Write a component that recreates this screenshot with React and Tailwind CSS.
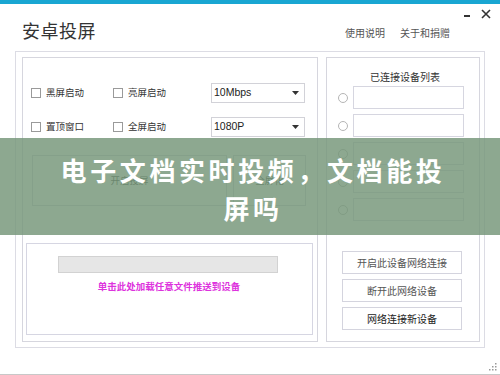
import React from 'react';

const cjk = "font-['Noto_Sans_CJK_SC',sans-serif]";

const CheckItem = ({ label, className = '' }) => (
    <div className={`flex items-center gap-[5px] ${className}`}>
        <span className="w-[10px] h-[10px] border border-[#9a9a9a] bg-white" />
        <span className="text-[9.5px] leading-none text-[#333]">{label}</span>
    </div>
);

const SelectBox = ({ value }) => (
    <div className="ml-auto mr-[12px] w-[94px] h-[20px] border border-[#d2d2d8] flex items-center pl-[2px] pr-[5px] text-[10.5px] text-[#222] font-['Liberation_Sans',sans-serif]">
        <span>{value}</span>
        <svg className="ml-auto" width="7" height="4" viewBox="0 0 7 4"><path d="M0 0h7L3.5 4z" fill="#333" /></svg>
    </div>
);

const DeviceRow = () => (
    <div className="flex items-center h-[23px]">
        <span className="ml-[11px] w-[10px] h-[10px] rounded-full border border-[#b5b5b5] bg-white" />
        <div className="ml-[5px] w-[111px] h-[23px] border border-[#d6d6e0] bg-white" />
    </div>
);

const ActionButton = ({ label, dark }) => (
    <div className={`mx-auto w-[120px] h-[23px] border border-[#d4d4de] flex items-center justify-center text-[10px] ${dark ? 'text-[#222]' : 'text-[#555]'}`}>
        {label}
    </div>
);

export default function App() {
    return (
        <div className={`relative w-[500px] h-[375px] bg-white overflow-hidden border-b border-[#c8c8c8] ${cjk}`}>
            <div className="h-[4px] bg-[#19a6d2]" />

            <div className="flex h-[47px]">
                <div className="pl-[22px] pt-[12px] text-[18px] leading-[28px] text-[#333] tracking-[0.5px]">安卓投屏</div>
                <div className="ml-auto flex flex-col items-end">
                    <div className="flex items-center gap-[11px] pr-[9px] pt-[3px] h-[16px] text-[#222]">
                        <span className="w-[6px] h-[2px] bg-[#333] mt-[4px]" />
                        <svg width="10" height="10" viewBox="0 0 10 10"><path d="M1 1l8 8M9 1l-8 8" stroke="#333" strokeWidth="1.6" /></svg>
                    </div>
                    <div className="flex gap-[15px] pr-[50px] pt-[5px] text-[10px] text-[#555]">
                        <span>使用说明</span>
                        <span>关于和捐赠</span>
                    </div>
                </div>
            </div>

            <div className="ml-[15px] w-[470px] h-[297px] border border-[#dcdce4] flex pl-[6px] pt-[5px] pr-[4px] gap-[8px]">
                {/* left panel */}
                <div className="w-[296px] h-[285px] border border-[#d6d6de] flex flex-col">
                    <div className="flex items-center h-[20px] mt-[25px] pl-[8px]">
                        <CheckItem label="黑屏启动" className="w-[82px]" />
                        <CheckItem label="亮屏启动" />
                        <SelectBox value="10Mbps" />
                    </div>
                    <div className="flex items-center h-[20px] mt-[14px] pl-[8px]">
                        <CheckItem label="置顶窗口" className="w-[82px]" />
                        <CheckItem label="全屏启动" />
                        <SelectBox value="1080P" />
                    </div>
                    <div className="flex gap-[6px] mt-[18px] pl-[9px]">
                        <div className="w-[195px] h-[51px] border border-[#d0d0d8] flex items-center justify-center text-[9.5px] text-[#333]">开启投屏</div>
                        <div className="w-[73px] h-[51px] border border-[#d0d0d8] flex items-center justify-center text-[9.5px] text-[#333]">全屏化</div>
                    </div>
                    <div className="ml-[3px] mt-[37px] w-[287px] h-[92px] border border-[#d6d6e2] flex flex-col items-center">
                        <div className="mt-[12px] mr-[3px] w-[220px] h-[17px] bg-[#e6e6e6] border border-[#d2d2d2]" />
                        <div className="mt-[9px] mr-[1px] text-[9.5px] font-bold text-[#dd33dd] leading-none">单击此处加载任意文件推送到设备</div>
                    </div>
                </div>

                {/* right panel */}
                <div className="w-[154px] h-[285px] border border-[#d6d6de] flex flex-col">
                    <div className="mt-[13px] text-center text-[10px] leading-[12px] text-[#333] pl-[4px]">已连接设备列表</div>
                    <div className="mt-[3px] flex flex-col gap-[5px]">
                        <DeviceRow />
                        <DeviceRow />
                        <DeviceRow />
                        <DeviceRow />
                        <DeviceRow />
                    </div>
                    <div className="mt-[30px] flex flex-col gap-[5px] pr-[2px]">
                        <ActionButton label="开启此设备网络连接" />
                        <ActionButton label="断开此网络设备" />
                        <ActionButton label="网络连接新设备" dark />
                    </div>
                </div>
            </div>

            <svg className="absolute right-[3px] bottom-[3px]" width="8" height="8" viewBox="0 0 8 8">
                <rect x="6" y="0" width="1.5" height="1.5" fill="#999" />
                <rect x="3" y="3" width="1.5" height="1.5" fill="#999" />
                <rect x="6" y="3" width="1.5" height="1.5" fill="#999" />
                <rect x="0" y="6" width="1.5" height="1.5" fill="#999" />
                <rect x="3" y="6" width="1.5" height="1.5" fill="#999" />
                <rect x="6" y="6" width="1.5" height="1.5" fill="#999" />
            </svg>

            {/* caption banner */}
            <div className="absolute left-0 right-0 top-[138px] h-[97px] bg-[rgba(118,150,121,0.83)] pt-[13px]">
                <div className="mx-auto w-[400px] text-center text-white font-bold text-[26px] leading-[38px] tracking-[3.6px] pl-[6px]">
                    电子文档实时投频，文档能投屏吗
                </div>
            </div>
        </div>
    );
}
